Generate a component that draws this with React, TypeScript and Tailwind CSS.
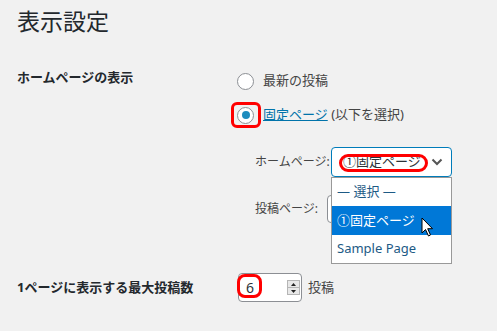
import { ReactNode } from "react";

const font = "font-['Noto_Sans','Noto_Sans_CJK_JP',sans-serif]";

function Radio({ checked }: { checked?: boolean }) {
  return (
    <span className="flex h-[17px] w-[17px] shrink-0 items-center justify-center rounded-full border border-[#8c8f94] bg-white">
      {checked && <span className="h-[8px] w-[8px] rounded-full bg-[#1e8cbe]" />}
    </span>
  );
}

function Row({ label, children }: { label: string; children: ReactNode }) {
  return (
    <div className="grid grid-cols-[220px_1fr] pl-[17px]">
      <div className="text-[13px] font-bold leading-[10px] text-[#23282d]">{label}</div>
      <div>{children}</div>
    </div>
  );
}

function Cursor() {
  return (
    <svg width="14" height="21" viewBox="0 0 14 21" className="absolute left-[89px] top-[39px]">
      <path
        d="M1 1 L1 16 L4.5 12.5 L7.5 19 L9.5 18 L6.7 11.7 L11.5 11.7 Z"
        fill="#fff"
        stroke="#000"
        strokeWidth="1"
        strokeLinejoin="round"
      />
    </svg>
  );
}

export default function App() {
  return (
    <div className={`${font} relative h-[331px] w-[497px] overflow-hidden bg-[#f1f1f1] text-[#444]`}>
      <h1 className="pl-[17px] pt-[5px] text-[23px] font-normal leading-[32px] text-[#23282d]">表示設定</h1>

      <div className="mt-[35px]">
        <Row label="ホームページの表示">
          <label className="flex h-[18px] items-center gap-[9px] text-[13px]">
            <Radio />
            最新の投稿
          </label>

          <label className="mt-[16px] flex h-[18px] items-center gap-[9px] text-[13px]">
            <span className="relative">
              <Radio checked />
              <span className="absolute -left-[6px] -top-[5px] h-[26px] w-[30px] rounded-[6px] border-[3px] border-[#ff0000]" />
            </span>
            <span>
              <span className="text-[#0073aa] underline">固定ページ</span> (以下を選択)
            </span>
          </label>

          <div className="pl-[18px] pt-[23px]">
            <div className="flex items-center">
              <span className="w-[76px] shrink-0 whitespace-nowrap text-[12px]">ホームページ:</span>
              <div className="relative flex h-[30px] w-[121px] shrink-0 items-center justify-between rounded-[4px] border border-[#007cba] bg-white pl-[11px] pr-[8px] text-[13px] text-[#2c3338]">
                <span className="whitespace-nowrap">①固定ページ</span>
                <svg width="12" height="8" viewBox="0 0 12 8">
                  <path d="M1.5 1.5 L6 6 L10.5 1.5" fill="none" stroke="#555" strokeWidth="2" />
                </svg>
                <span className="absolute left-[7px] top-[6px] h-[18px] w-[89px] rounded-full border-[3px] border-[#ff0000]" />

                <div className="absolute -left-[1px] top-[29px] z-10 w-[121px] border border-[#999] bg-white text-[13px] text-[#1d5a85]">
                  <div className="flex h-[28px] items-center pl-[5px]">— 選択 —</div>
                  <div className="flex h-[29px] items-center bg-[#0078d7] pl-[5px] text-white">①固定ページ</div>
                  <div className="flex h-[28px] items-center pl-[5px]">Sample Page</div>
                  <Cursor />
                </div>
              </div>
            </div>

            <div className="mt-[18px] flex items-center">
              <span className="w-[72px] shrink-0 whitespace-nowrap text-[12px]">投稿ページ:</span>
              <div className="h-[28px] w-[121px] shrink-0 rounded-[4px] border border-[#8c8f94] bg-white" />
            </div>
          </div>
        </Row>
      </div>

      <div className="mt-[50px]">
        <div className="grid grid-cols-[221px_1fr] items-center pl-[17px]">
          <div className="text-[13px] font-bold text-[#23282d]">1ページに表示する最大投稿数</div>
          <div className="flex items-center gap-[6px]">
            <div className="relative flex h-[29px] w-[64px] items-center justify-between rounded-[4px] border border-[#8c8f94] bg-white pl-[7px] pr-[1px] text-[14px] text-[#2c3338]">
              <span>6</span>
              <span className="flex h-[15px] w-[13px] flex-col border border-[#b5b5b5] bg-[#e8e8e8]">
                <span className="flex flex-1 items-center justify-center border-b border-[#b5b5b5]">
                  <svg width="5" height="3" viewBox="0 0 5 3"><path d="M0 3 L2.5 0 L5 3 Z" fill="#222" /></svg>
                </span>
                <span className="flex flex-1 items-center justify-center">
                  <svg width="5" height="3" viewBox="0 0 5 3"><path d="M0 0 L2.5 3 L5 0 Z" fill="#222" /></svg>
                </span>
              </span>
              <span className="absolute -left-[2px] top-0 h-[24px] w-[25px] rounded-[8px] border-[3px] border-[#ff0000]" />
            </div>
            <span className="text-[13px]">投稿</span>
          </div>
        </div>
      </div>
    </div>
  );
}
